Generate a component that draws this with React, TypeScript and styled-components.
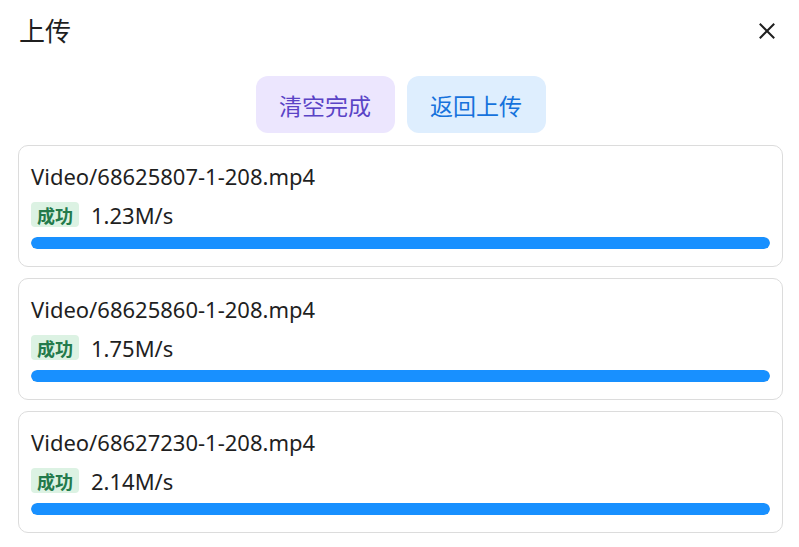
import styled, { createGlobalStyle } from "styled-components"

const GlobalStyle = createGlobalStyle`
  html, body {
    margin: 0;
    padding: 0;
    background: #ffffff;
  }
  body {
    font-family: "Noto Sans", "Noto Sans CJK SC", sans-serif;
    color: #1f1f1f;
  }
`

const uploads = [
    { name: "Video/68625807-1-208.mp4", speed: "1.23M/s", progress: 100 },
    { name: "Video/68625860-1-208.mp4", speed: "1.75M/s", progress: 100 },
    { name: "Video/68627230-1-208.mp4", speed: "2.14M/s", progress: 100 },
]

export default function App() {
    return (
        <Panel>
            <GlobalStyle />
            <Header>
                <Title>上传</Title>
                <CloseButton aria-label="close">
                    <svg width="16" height="16" viewBox="0 0 16 16" fill="none">
                        <path d="M1.5 1.5L14.5 14.5M14.5 1.5L1.5 14.5" stroke="#1f1f1f" strokeWidth="2" strokeLinecap="square" />
                    </svg>
                </CloseButton>
            </Header>
            <Actions>
                <ActionButton $variant="purple">清空完成</ActionButton>
                <ActionButton $variant="blue">返回上传</ActionButton>
            </Actions>
            <List>
                {uploads.map((item) => (
                    <Card key={item.name}>
                        <FileName>{item.name}</FileName>
                        <StatusRow>
                            <Tag>成功</Tag>
                            <Speed>{item.speed}</Speed>
                        </StatusRow>
                        <Track>
                            <Bar style={{ width: `${item.progress}%` }} />
                        </Track>
                    </Card>
                ))}
            </List>
        </Panel>
    )
}

const Panel = styled.div`
    width: 799px;
    height: 547px;
    box-sizing: border-box;
    padding: 0 16px 0 18px;
    display: flex;
    flex-direction: column;
    overflow: hidden;
`

const Header = styled.div`
    display: flex;
    align-items: center;
    justify-content: space-between;
    height: 32px;
    padding: 15px 8px 0 1px;
`

const Title = styled.div`
    font-size: 26px;
    line-height: 32px;
    color: #1f1f1f;
`

const CloseButton = styled.button`
    border: none;
    background: transparent;
    padding: 0;
    width: 16px;
    height: 16px;
    display: flex;
    align-items: center;
    justify-content: center;
    cursor: pointer;
`

const Actions = styled.div`
    display: flex;
    justify-content: center;
    gap: 12px;
    margin-top: 29px;
`

const ActionButton = styled.button<{ $variant: "purple" | "blue" }>`
    border: none;
    border-radius: 12px;
    width: 139px;
    height: 57px;
    font-family: "Noto Sans", "Noto Sans CJK SC", sans-serif;
    font-size: 23px;
    cursor: pointer;
    background: ${(p) => (p.$variant === "purple" ? "#ece6fe" : "#deeefe")};
    color: ${(p) => (p.$variant === "purple" ? "#5a43c6" : "#1672dc")};
`

const List = styled.div`
    display: flex;
    flex-direction: column;
    gap: 11px;
    margin-top: 12px;
`

const Card = styled.div`
    border: 1px solid #dcdcdc;
    border-radius: 10px;
    padding: 16px 12px 17px;
    display: flex;
    flex-direction: column;
`

const FileName = styled.div`
    font-size: 22px;
    line-height: 28px;
    color: #1f1f1f;
`

const StatusRow = styled.div`
    display: flex;
    align-items: center;
    gap: 12px;
    margin-top: 12px;
    height: 25px;
`

const Tag = styled.span`
    display: inline-flex;
    align-items: center;
    height: 25px;
    padding: 0 6px;
    border-radius: 4px;
    background: #dcf2e3;
    color: #237a4b;
    font-size: 18px;
    font-weight: 700;
`

const Speed = styled.span`
    font-size: 22px;
    line-height: 25px;
    padding-top: 2px;
    color: #1f1f1f;
`

const Track = styled.div`
    margin-top: 10px;
    height: 12px;
    border-radius: 6px;
    background: #e6e6e6;
    overflow: hidden;
`

const Bar = styled.div`
    height: 100%;
    border-radius: 6px;
    background: #1890ff;
`
